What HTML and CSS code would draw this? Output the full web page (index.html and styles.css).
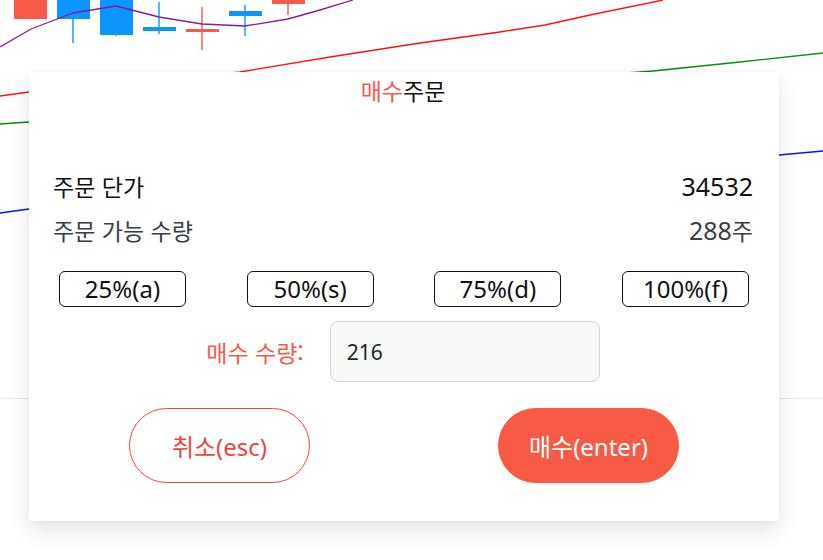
FILE: index.html
```html
<!DOCTYPE html>
<html lang="ko">
<head>
<meta charset="utf-8">
<title>매수주문</title>
<link rel="stylesheet" href="styles.css">
</head>
<body>
<div class="page">
  <div class="chart">
    <svg class="chart-svg" width="823" height="398" viewBox="0 0 823 398" xmlns="http://www.w3.org/2000/svg">
      <g class="wick-up">
        <line x1="31" y1="0" x2="31" y2="5"/>
        <line x1="202" y1="7" x2="202" y2="50"/>
        <line x1="288" y1="0" x2="288" y2="15"/>
      </g>
      <g class="wick-down">
        <line x1="73" y1="0" x2="73" y2="43"/>
        <line x1="116" y1="0" x2="116" y2="36"/>
        <line x1="159" y1="2" x2="159" y2="34"/>
        <line x1="245" y1="5" x2="245" y2="36"/>
      </g>
      <rect class="up" x="14" y="-2" width="33" height="21"/>
      <rect class="down" x="57" y="-2" width="33" height="21"/>
      <rect class="down" x="100" y="-2" width="33" height="37"/>
      <rect class="down" x="143" y="27" width="33" height="4"/>
      <rect class="up" x="186" y="29" width="33" height="3"/>
      <rect class="down" x="229" y="11" width="33" height="5"/>
      <rect class="up" x="272" y="-2" width="33" height="6"/>
      <polyline class="ma-purple" points="0,47 31,29 73,13 116,6 159,17 202,24 245,26 288,19 320,10 353,0"/>
      <polyline class="ma-red" points="0,96 29,92 130,84 240,72 330,57 420,43 500,32 545,25 590,15 663,0"/>
      <polyline class="ma-green" points="0,124 29,122 200,108 400,90 560,78 653,71 740,62 823,53"/>
      <polyline class="ma-blue" points="0,213 29,209 300,190 550,170 779,155 823,151"/>
    </svg>
  </div>

  <div class="dialog">
    <h2 class="title"><span class="accent">매수</span>주문</h2>

    <div class="info">
      <div class="info-row primary">
        <span>주문 단가</span>
        <span class="num">34532</span>
      </div>
      <div class="info-row secondary">
        <span>주문 가능 수량</span>
        <span><span class="num">288</span>주</span>
      </div>
    </div>

    <div class="pct-row">
      <button class="pct-btn">25%(a)</button>
      <button class="pct-btn">50%(s)</button>
      <button class="pct-btn">75%(d)</button>
      <button class="pct-btn">100%(f)</button>
    </div>

    <div class="qty-row">
      <label class="qty-label" for="qty">매수 수량:</label>
      <input id="qty" class="qty-input" type="text" value="216">
    </div>

    <div class="action-row">
      <button class="btn-cancel">취소(esc)</button>
      <button class="btn-buy">매수(enter)</button>
    </div>
  </div>
</div>
</body>
</html>
```

FILE: styles.css
```css
* {
  box-sizing: border-box;
}

html, body {
  margin: 0;
  padding: 0;
  background: #ffffff;
}

body {
  font-family: "Noto Sans", "Noto Sans CJK KR", sans-serif;
  color: #111111;
}

.page {
  position: relative;
  width: 823px;
  height: 560px;
  overflow: hidden;
  background: #ffffff;
}

.chart {
  height: 399px;
  border-bottom: 1px solid #e9e9e9;
}

.chart-svg {
  display: block;
}

.chart-svg .up {
  fill: #f75a48;
}

.chart-svg .down {
  fill: #0b95fd;
}

.chart-svg .wick-up line {
  stroke: #f75a48;
  stroke-width: 1.4;
}

.chart-svg .wick-down line {
  stroke: #0b95fd;
  stroke-width: 1.4;
}

.chart-svg polyline {
  fill: none;
  stroke-width: 1.3;
  stroke-linejoin: round;
}

.ma-purple { stroke: #8a1a9a; }
.ma-red { stroke: #ff1010; }
.ma-green { stroke: #128a12; }
.ma-blue { stroke: #1010ff; }

.dialog {
  position: absolute;
  left: 29px;
  top: 72px;
  width: 750px;
  height: 449px;
  background: #ffffff;
  border-radius: 4px;
  box-shadow: 0 10px 22px rgba(0, 0, 0, 0.10), 0 0 6px rgba(0, 0, 0, 0.04);
  padding: 4px 26px 0 24px;
  display: flex;
  flex-direction: column;
}

.title {
  margin: 0;
  font-family: "Noto Sans CJK KR", sans-serif;
  font-weight: 400;
  font-size: 23px;
  line-height: 28px;
  text-align: center;
  color: #111111;
}

.accent {
  color: #f75a48;
}

.info {
  margin-top: 68px;
  display: flex;
  flex-direction: column;
  gap: 16px;
}

.info-row {
  display: flex;
  justify-content: space-between;
  align-items: baseline;
  font-family: "Noto Sans CJK KR", sans-serif;
  font-size: 23px;
  line-height: 28px;
}

.info-row .num {
  font-family: "Noto Sans", sans-serif;
  font-size: 25px;
}

.info-row.primary {
  color: #111111;
}

.info-row.secondary {
  color: #3b3d45;
}

.pct-row {
  margin: 27px 4px 0 6px;
  display: flex;
  justify-content: space-between;
}

.pct-btn {
  width: 127px;
  height: 36px;
  border: 1px solid #111111;
  border-radius: 6px;
  background: #ffffff;
  font-family: "Noto Sans", sans-serif;
  font-size: 24px;
  line-height: 32px;
  color: #111111;
  padding: 0;
}

.qty-row {
  margin-top: 14px;
  display: flex;
  justify-content: center;
  align-items: center;
  gap: 26px;
}

.qty-label {
  font-family: "Noto Sans CJK KR", sans-serif;
  font-size: 23px;
  color: #f75a48;
}

.qty-input {
  width: 270px;
  height: 61px;
  border: 1px solid #d3d5d8;
  border-radius: 8px;
  background: #f7f8f8;
  padding: 0 16px;
  font-family: "Noto Sans", sans-serif;
  font-size: 21px;
  color: #212529;
  outline: none;
}

.action-row {
  margin: 26px -26px 0 -24px;
  padding: 0 100px;
  display: flex;
  justify-content: space-between;
}

.btn-cancel,
.btn-buy {
  width: 181px;
  height: 75px;
  border-radius: 38px;
  font-family: "Noto Sans", "Noto Sans CJK KR", sans-serif;
  font-size: 24px;
  padding: 0;
}

.btn-cancel {
  border: 1px solid #f0453d;
  background: #ffffff;
  color: #f0453d;
}

.btn-buy {
  border: 1px solid #f75a45;
  background: #f75a45;
  color: #ffffff;
}
```
